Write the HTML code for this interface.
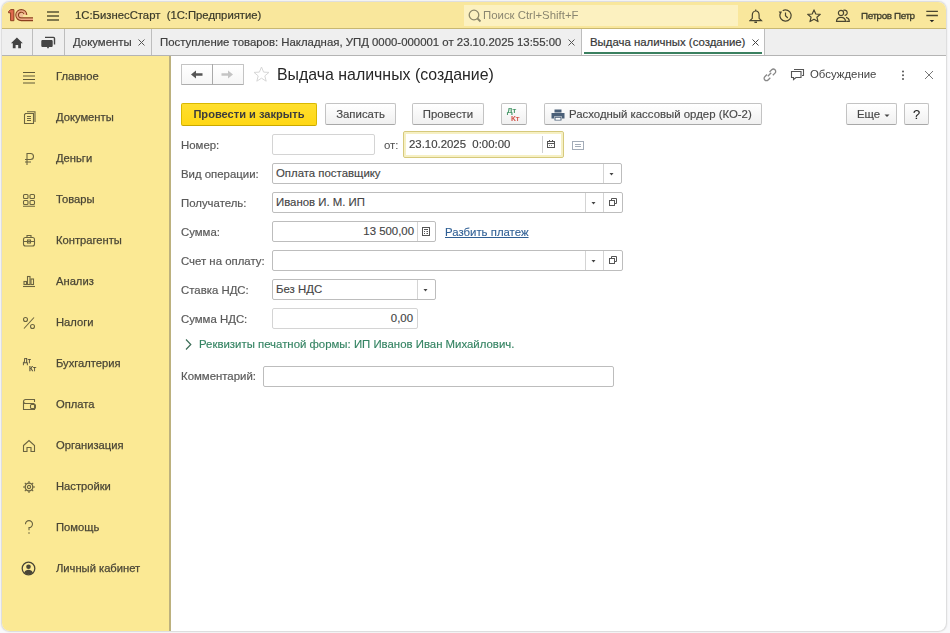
<!DOCTYPE html>
<html><head><meta charset="utf-8">
<style>
*{box-sizing:border-box;margin:0;padding:0}
html,body{width:950px;height:633px;overflow:hidden;background:#f9f9fb;font-family:"Liberation Sans",sans-serif;font-size:11.4px;color:#333}
.a{position:absolute;white-space:nowrap}
#win{position:absolute;left:2px;top:2px;width:944px;height:629px;border-radius:8px;overflow:hidden;background:#fff;box-shadow:0 0 1.5px 0.5px #d8d8d8;filter:blur(0.3px)}
#hdr{position:absolute;left:0;top:0;width:944px;height:27px;background:#f9e79c;border-bottom:1px solid #c8b872}
#tabs{position:absolute;left:0;top:27px;width:944px;height:27px;background:#efefef;border-bottom:1px solid #b4b4b4}
#side{position:absolute;left:0;top:54px;width:169px;height:575px;background:#fbe994;border-right:2px solid #bcb17e}
.sep{position:absolute;top:0;width:1px;height:26px;background:#bdbdbd}
.tab{position:absolute;top:0;height:26px;line-height:26px;color:#404040;-webkit-text-stroke:0.2px #404040}
.x{position:absolute;width:7px;height:7px}
.si{position:absolute;left:54px;color:#4a4636;font-size:11.2px;-webkit-text-stroke:0.25px #4a4636}
.btn{position:absolute;top:101px;height:22px;border:1px solid #c3c3c3;border-bottom-color:#a8a8a8;border-radius:2px;background:linear-gradient(#fff,#f0f0f0);color:#484848;-webkit-text-stroke:0.15px #484848;text-align:center;line-height:20px}
.lbl{position:absolute;left:179px;color:#5a5a5a;-webkit-text-stroke:0.2px #5a5a5a}
.inp{position:absolute;height:21px;border:1px solid #c9c9c9;border-radius:2px;background:#fff;line-height:19px;padding-left:3px;color:#454545;-webkit-text-stroke:0.15px #454545}
.dd{position:absolute;top:0;width:17px;height:19px;border-left:1px solid #d4d4d4}
</style></head><body>
<div id="win">
  <div id="hdr">
    <!-- 1C logo -->
    <svg class="a" style="left:3px;top:3px" width="32" height="20" viewBox="0 0 32 20">
      <path d="M20.4 10.1A4.1 4.1 0 1 0 16.3 14.2H28" fill="none" stroke="#f0a488" stroke-width="1.6"/><circle cx="16.3" cy="10.1" r="2.2" fill="#f3c19a"/>
      <path d="M3.6 6.6L5.6 4.6H8.9V15.7H5.6V7.8H3.6Z" fill="#e06a4e" stroke="#8c3f1f" stroke-width="1"/>
      <path d="M21.8 10.1A5.5 5.5 0 1 0 16.3 15.6H28M18.9 9.1A2.8 2.8 0 1 0 16.3 12.9H28" fill="none" stroke="#8c3f1f" stroke-width="1.1"/>
    </svg>
    <!-- hamburger -->
    <svg class="a" style="left:44px;top:8px" width="14" height="12"><g stroke="#5a5535" stroke-width="1.4"><path d="M1 2H13M1 6H13M1 10H13"/></g></svg>
    <div class="a" style="left:73px;top:7px;font-size:11.3px;color:#3a3a2a;-webkit-text-stroke:0.2px #3a3a2a">1С:БизнесСтарт&nbsp;&nbsp;(1С:Предприятие)</div>
    <div class="a" style="left:462px;top:3px;width:274px;height:21px;background:#fcf1c0"></div>
    <svg class="a" style="left:466px;top:7px" width="14" height="14"><circle cx="6" cy="6" r="4.8" fill="none" stroke="#8c876a" stroke-width="1.3"/><path d="M9.5 9.5L12.5 12.5" stroke="#8c876a" stroke-width="1.8"/></svg>
    <div class="a" style="left:481px;top:7px;color:#8a8670">Поиск Ctrl+Shift+F</div>
    <!-- right icons -->
    <svg class="a" style="left:747px;top:7px" width="14" height="15"><g fill="none" stroke="#4a4630" stroke-width="1.2"><path d="M6.7 0.6V2"/><path d="M6.7 2C4.3 2 3.3 3.9 3.3 6.3V9.3L1 11.6H12.4L10.1 9.3V6.3C10.1 3.9 9.1 2 6.7 2Z"/></g><path d="M5.4 13.2H8" stroke="#4a4630" stroke-width="1.5"/></svg>
    <svg class="a" style="left:776px;top:7px" width="15" height="15"><g fill="none" stroke="#4a4630" stroke-width="1.2"><path d="M4.7 1.65A5.6 5.6 0 1 1 2.24 4.58"/><path d="M7.5 3.6V6.8L9.8 9"/></g><path d="M0.6 2.6L4 2.4L2.6 5.6Z" fill="#4a4630"/></svg>
    <svg class="a" style="left:805px;top:7px" width="15" height="15"><path d="M7 0.9L8.8 5L13.3 5.3L9.9 8.2L11 12.6L7 10.2L3 12.6L4.1 8.2L0.7 5.3L5.2 5Z" fill="none" stroke="#4a4630" stroke-width="1.2" stroke-linejoin="round"/></svg>
    <svg class="a" style="left:833px;top:7px" width="16" height="15"><g fill="none" stroke="#4a4630" stroke-width="1.2"><circle cx="6" cy="3.9" r="2.6"/><path d="M1.5 12.4C1.5 9.6 3.5 8.3 6 8.3S10.5 9.6 10.5 12.4Z"/><path d="M8.4 1.4A2.6 2.6 0 1 1 9.6 6.3"/><path d="M11 8.4C13 8.9 14.3 10.2 14.3 12.4H11.2"/></g></svg>
    <div class="a" style="left:859px;top:8px;font-size:9.9px;letter-spacing:-0.4px;color:#3a3a2a;-webkit-text-stroke:0.3px #3a3a2a">Петров Петр</div>
    <svg class="a" style="left:924px;top:8px" width="14" height="14"><path d="M0.3 1.3H11.9M0.3 5.5H11.9" stroke="#4a4630" stroke-width="1.3"/><path d="M3.6 9.9H8.2L5.9 12.2z" fill="#222"/></svg>
  </div>
  <div id="tabs">
    <svg class="a" style="left:8px;top:8px" width="14" height="12"><path d="M6.9 0.5L12.8 6.2H11V11.2H8.2V8H5.6V11.2H2.8V6.2H1Z" fill="#444"/></svg>
    <div class="sep" style="left:30px"></div>
    <svg class="a" style="left:38px;top:7px" width="17" height="15"><path d="M5 1.4H13.5A1 1 0 0 1 14.5 2.4V8.5" fill="none" stroke="#444" stroke-width="1.4"/><path d="M2.5 4H11.5A1.2 1.2 0 0 1 12.7 5.2V9.8A1.2 1.2 0 0 1 11.5 11H9.2L8 12.8L6.8 11H2.5A1.2 1.2 0 0 1 1.3 9.8V5.2A1.2 1.2 0 0 1 2.5 4Z" fill="#444"/></svg>
    <div class="sep" style="left:62px"></div>
    <div class="tab" style="left:71px">Документы</div>
    <svg class="x" style="left:136px;top:10px"><path d="M0.5 0.5L6.5 6.5M6.5 0.5L0.5 6.5" stroke="#555" stroke-width="1"/></svg>
    <div class="sep" style="left:149px"></div>
    <div class="tab" style="left:158px">Поступление товаров: Накладная, УПД 0000-000001 от 23.10.2025 13:55:00</div>
    <svg class="x" style="left:566px;top:10px"><path d="M0.5 0.5L6.5 6.5M6.5 0.5L0.5 6.5" stroke="#555" stroke-width="1"/></svg>
    <div class="sep" style="left:579px"></div>
    <div class="a" style="left:580px;top:0;width:182px;height:26px;background:#fff"></div>
    <div class="tab" style="left:588px;color:#333">Выдача наличных (создание)</div>
    <svg class="x" style="left:750px;top:10px"><path d="M0.5 0.5L6.5 6.5M6.5 0.5L0.5 6.5" stroke="#444" stroke-width="1"/></svg>
    <div class="a" style="left:582px;top:23px;width:178px;height:2px;background:#3b8060"></div>
    <div class="sep" style="left:762px"></div>
  </div>
  <div id="side">
    <svg class="a" style="left:20px;top:15px" width="14" height="13"><path d="M1 1.5H13M1 5H13M1 8.5H13M1 12H13" stroke="#615b38" stroke-width="1.2"/></svg>
    <div class="si" style="top:14px">Главное</div>
    <svg class="a" style="left:20px;top:55px" width="14" height="14"><g fill="none" stroke="#6b6440" stroke-width="1.1"><path d="M3.5 2.5H11.5V12.5H2.5V3.5Z"/><path d="M5 0.8H13V11"/><path d="M5 5.5H9M5 7.5H9M5 9.5H9"/></g></svg>
    <div class="si" style="top:55px">Документы</div>
    <svg class="a" style="left:21px;top:96px" width="12" height="14"><g fill="none" stroke="#6b6440" stroke-width="1.1"><path d="M4 13V1.5H7.5A3 3 0 0 1 7.5 7.5H2M2 10H8"/></g></svg>
    <div class="si" style="top:96px">Деньги</div>
    <svg class="a" style="left:20px;top:137px" width="14" height="14"><g fill="none" stroke="#6b6440" stroke-width="1.1"><rect x="1.5" y="1.5" width="4.5" height="4" rx="1"/><rect x="8" y="1.5" width="4.5" height="4" rx="1"/><rect x="1.5" y="7.5" width="4.5" height="4" rx="1"/><rect x="8" y="7.5" width="4.5" height="4" rx="1"/><path d="M1 13.2H13"/></g></svg>
    <div class="si" style="top:137px">Товары</div>
    <svg class="a" style="left:20px;top:178px" width="14" height="14"><g fill="none" stroke="#6b6440" stroke-width="1.1"><rect x="1.5" y="3.5" width="11" height="8.5" rx="2"/><path d="M5 3.5V1.5H9V3.5M1.5 7.5H12.5"/><rect x="5.5" y="6" width="3" height="3"/></g></svg>
    <div class="si" style="top:178px">Контрагенты</div>
    <svg class="a" style="left:20px;top:219px" width="14" height="14"><g fill="none" stroke="#6b6440" stroke-width="1.1"><path d="M1 11.5H13"/><rect x="2" y="6.5" width="2.5" height="3"/><rect x="5.5" y="1.5" width="2.5" height="8"/><rect x="9" y="4" width="2.5" height="5.5"/></g></svg>
    <div class="si" style="top:219px">Анализ</div>
    <svg class="a" style="left:20px;top:260px" width="14" height="14"><g fill="none" stroke="#6b6440" stroke-width="1.1"><circle cx="3.5" cy="3.5" r="2"/><circle cx="10.5" cy="10.5" r="2"/><path d="M12 1.5L2 12.5"/></g></svg>
    <div class="si" style="top:260px">Налоги</div>
    <div class="a" style="left:21px;top:301px;font-size:7px;color:#4a4636;line-height:7px;-webkit-text-stroke:0.25px #4a4636">Дт</div><div class="a" style="left:27px;top:309px;font-size:7px;color:#4a4636;line-height:7px;-webkit-text-stroke:0.25px #4a4636">Кт</div>
    <div class="si" style="top:301px">Бухгалтерия</div>
    <svg class="a" style="left:20px;top:341px" width="14" height="14"><g fill="none" stroke="#6b6440" stroke-width="1.1"><path d="M12.5 5V2.5H3.5A2 2 0 0 0 1.5 4.5V12.5H12.5V8"/><rect x="8.5" y="7.5" width="5" height="4" rx="1"/><path d="M1.5 4.5A2 2 0 0 0 3.5 6.5H12.5"/></g></svg>
    <div class="si" style="top:342px">Оплата</div>
    <svg class="a" style="left:20px;top:383px" width="14" height="14"><g fill="none" stroke="#6b6440" stroke-width="1.1"><path d="M1.5 6.5L7 1.5L12.5 6.5V12.5H9V8.5H5V12.5H1.5Z"/></g></svg>
    <div class="si" style="top:383px">Организация</div>
    <svg class="a" style="left:20px;top:424px" width="14" height="14"><g fill="none" stroke="#6b6440" stroke-width="1.1"><circle cx="7" cy="7" r="3.8" stroke-width="1.3"/><circle cx="7" cy="7" r="1.6"/><path d="M7 1V3.2M7 10.8V13M1 7H3.2M10.8 7H13M2.8 2.8L4.3 4.3M9.7 9.7L11.2 11.2M2.8 11.2L4.3 9.7M9.7 4.3L11.2 2.8"/></g></svg>
    <div class="si" style="top:424px">Настройки</div>
    <svg class="a" style="left:22px;top:464px" width="10" height="15"><path d="M1.5 4.2A3.5 3.5 0 1 1 5 7.6V10.2" fill="none" stroke="#6b6440" stroke-width="1.1"/><circle cx="5" cy="13" r="0.8" fill="#6b6440"/></svg>
    <div class="si" style="top:465px">Помощь</div>
    <svg class="a" style="left:19px;top:505px" width="15" height="15"><circle cx="7.5" cy="7.5" r="6.3" fill="none" stroke="#4a4636" stroke-width="1.3"/><circle cx="7.5" cy="5.8" r="2.3" fill="#4a4636"/><path d="M3.2 11.8C4 9.5 5.5 8.8 7.5 8.8S11 9.5 11.8 11.8A6 6 0 0 1 3.2 11.8Z" fill="#4a4636"/></svg>
    <div class="si" style="top:506px">Личный кабинет</div>
  </div>
  <div id="main">
    <!-- nav buttons -->
    <div class="a" style="left:179px;top:62px;width:63px;height:21px;border:1px solid #c4c4c4;border-bottom-color:#adadad;border-radius:1px;background:linear-gradient(#fff,#f6f6f6)"></div>
    <div class="a" style="left:210px;top:62px;width:1px;height:21px;background:#a9a9a9"></div>
    <svg class="a" style="left:189px;top:68px" width="12" height="9"><path d="M4 4.5H11.5" stroke="#555" stroke-width="2.6"/><path d="M0 4.5L5 0.5V8.5Z" fill="#555"/></svg>
    <svg class="a" style="left:219px;top:68px" width="12" height="9"><path d="M0.5 4.5H8" stroke="#c4c4c4" stroke-width="2.6"/><path d="M12 4.5L7 0.5V8.5Z" fill="#c4c4c4"/></svg>
    <svg class="a" style="left:251px;top:64px" width="17" height="17"><path d="M8.5 1L10.6 6.1L16 6.4L11.8 9.9L13.2 15.2L8.5 12.2L3.8 15.2L5.2 9.9L1 6.4L6.4 6.1Z" fill="none" stroke="#d6d6d6" stroke-width="1"/></svg>
    <div class="a" style="left:275px;top:64px;font-size:15.9px;color:#262626">Выдача наличных (создание)</div>
    <!-- right title icons -->
    <svg class="a" style="left:760px;top:65px" width="15" height="15"><g fill="none" stroke="#888" stroke-width="1.3"><path d="M5.8 9.2L9.2 5.8"/><path d="M5 7.5L2.8 9.7A2.3 2.3 0 0 0 6.1 13L8.3 10.8"/><path d="M7.5 5L9.7 2.8A2.3 2.3 0 0 1 13 6.1L10.8 8.3"/></g></svg>
    <svg class="a" style="left:788px;top:65px" width="15" height="14"><g fill="none" stroke="#555" stroke-width="1.1"><path d="M4 2.5H13.5V8.5H12"/><path d="M1.5 4.5H11V10.5H6L3.5 12.5V10.5H1.5Z"/></g></svg>
    <div class="a" style="left:808px;top:66px;color:#444">Обсуждение</div>
    <svg class="a" style="left:899px;top:67px" width="4" height="13"><circle cx="2" cy="2.5" r="1" fill="#555"/><circle cx="2" cy="6.2" r="1" fill="#555"/><circle cx="2" cy="9.9" r="1" fill="#555"/></svg>
    <svg class="a" style="left:922px;top:68px" width="10" height="10"><path d="M1 1L9 9M9 1L1 9" stroke="#777" stroke-width="1"/></svg>
    <!-- command bar -->
    <div class="a" style="left:179px;top:101px;width:136px;height:23px;border:1px solid #d9b800;border-bottom-color:#c9a800;border-radius:2px;background:linear-gradient(#ffdf2e,#ffd715);text-align:center;line-height:21px;font-weight:bold;font-size:11.1px;color:#3c3c3c">Провести и закрыть</div>
    <div class="btn" style="left:323px;width:71px">Записать</div>
    <div class="btn" style="left:410px;width:72px">Провести</div>
    <div class="btn" style="left:499px;width:26px"></div>
    <div class="a" style="left:505px;top:105px;font-size:8px;line-height:8px;color:#2f8a55;-webkit-text-stroke:0.2px #2f8a55">Дт</div>
    <div class="a" style="left:509px;top:113px;font-size:8px;line-height:8px;color:#d0453a;-webkit-text-stroke:0.2px #d0453a">Кт</div>
    <div class="btn" style="left:542px;width:218px;text-align:left;padding-left:24px">Расходный кассовый ордер (КО-2)</div>
    <svg class="a" style="left:549px;top:107px" width="14" height="12"><g fill="#4b6078"><rect x="3.5" y="0.5" width="7" height="3"/><path d="M0.5 4H13.5V9.5H11V7.5H3V9.5H0.5Z"/><rect x="3.5" y="8" width="7" height="3.5"/></g><rect x="4.5" y="8.8" width="5" height="2" fill="#fff"/></svg>
    <div class="btn" style="left:844px;width:51px;text-align:left;padding-left:10px">Еще</div>
    <svg class="a" style="left:882px;top:112px" width="6" height="4"><path d="M0.5 0.5H5.5L3 3Z" fill="#444"/></svg>
    <div class="btn" style="left:902px;width:25px;font-size:13px;line-height:22px;color:#222;-webkit-text-stroke:0.1px #222">?</div>
    <!-- form -->
    <div class="lbl" style="top:137px">Номер:</div>
    <div class="inp" style="left:270px;top:132px;width:103px;border-color:#d4d4d4"></div>
    <div class="a" style="left:382px;top:137px;color:#4d4d4d">от:</div>
    <div class="inp" style="left:401px;top:129px;width:161px;height:27px;border:1px solid #d6c97c;box-shadow:inset 0 0 0 2px #f6f0c4;padding-left:5px;line-height:25px;color:#404040">23.10.2025&nbsp;&nbsp;0:00:00<div class="dd" style="left:138px;top:4px;height:17px;width:20px;border-left-color:#cfcfcf"></div></div>
    <svg class="a" style="left:544px;top:137px" width="10" height="10"><g fill="none" stroke="#555" stroke-width="1"><rect x="1.5" y="2.5" width="7" height="6"/><path d="M1.5 4.5H8.5M3.5 1V3M6.5 1V3"/></g><g fill="#888"><rect x="3" y="6" width="1" height="1"/><rect x="5" y="6" width="1" height="1"/></g></svg>
    <svg class="a" style="left:569px;top:138px" width="14" height="11"><g fill="none" stroke="#a3acb8" stroke-width="1"><rect x="1.5" y="1.5" width="11" height="8"/><path d="M4 4.5H10M4 6.5H10"/></g></svg>

    <div class="lbl" style="top:166px">Вид операции:</div>
    <div class="inp" style="left:270px;top:161px;width:350px;border-color:#bdbdbd">Оплата поставщику<div class="dd" style="left:330px"></div></div>
    <svg class="a" style="left:607px;top:171px" width="5" height="3"><path d="M0.5 0H4.5L2.5 2.5Z" fill="#444"/></svg>

    <div class="lbl" style="top:195px">Получатель:</div>
    <div class="inp" style="left:270px;top:190px;width:351px;border-color:#bdbdbd">Иванов И. М. ИП<div class="dd" style="left:312px"></div><div class="dd" style="left:330px"></div></div>
    <svg class="a" style="left:589px;top:200px" width="5" height="3"><path d="M0.5 0H4.5L2.5 2.5Z" fill="#444"/></svg>
    <svg class="a" style="left:606px;top:195px" width="10" height="10"><g fill="none" stroke="#555" stroke-width="1"><rect x="1.5" y="3.5" width="5" height="5"/><path d="M3.5 3.5V1.5H8.5V6.5H6.5"/></g></svg>

    <div class="lbl" style="top:224px">Сумма:</div>
    <div class="inp" style="left:270px;top:219px;width:164px;border-color:#bdbdbd;text-align:right;padding-right:21px">13 500,00<div class="dd" style="left:144px;text-align:left"></div></div>
    <svg class="a" style="left:419px;top:224px" width="10" height="11"><g fill="none" stroke="#555" stroke-width="1"><rect x="1.5" y="1.5" width="7" height="8"/><path d="M3 3.5H7M3 5.5H4M5.5 5.5H7M3 7.5H4M5.5 7.5H7"/></g></svg>
    <div class="a" style="left:443px;top:224px;color:#2f5f94;text-decoration:underline;-webkit-text-stroke:0.1px #2f5f94">Разбить платеж</div>

    <div class="lbl" style="top:253px">Счет на оплату:</div>
    <div class="inp" style="left:270px;top:248px;width:351px;border-color:#bdbdbd"><div class="dd" style="left:312px"></div><div class="dd" style="left:330px"></div></div>
    <svg class="a" style="left:589px;top:258px" width="5" height="3"><path d="M0.5 0H4.5L2.5 2.5Z" fill="#444"/></svg>
    <svg class="a" style="left:606px;top:253px" width="10" height="10"><g fill="none" stroke="#555" stroke-width="1"><rect x="1.5" y="3.5" width="5" height="5"/><path d="M3.5 3.5V1.5H8.5V6.5H6.5"/></g></svg>

    <div class="lbl" style="top:282px">Ставка НДС:</div>
    <div class="inp" style="left:270px;top:277px;width:164px;border-color:#bdbdbd">Без НДС<div class="dd" style="left:144px"></div></div>
    <svg class="a" style="left:421px;top:287px" width="5" height="3"><path d="M0.5 0H4.5L2.5 2.5Z" fill="#444"/></svg>

    <div class="lbl" style="top:311px">Сумма НДС:</div>
    <div class="inp" style="left:270px;top:306px;width:146px;border-color:#d4d4d4;text-align:right;padding-right:4px">0,00</div>

    <svg class="a" style="left:182px;top:336px" width="9" height="13"><path d="M2 1.5L6.8 6.5L2 11.5" fill="none" stroke="#3d6e58" stroke-width="1.2"/></svg>
    <div class="a" style="left:197px;top:336px;color:#358463;-webkit-text-stroke:0.15px #358463">Реквизиты печатной формы: ИП Иванов Иван Михайлович.</div>

    <div class="lbl" style="top:368px">Комментарий:</div>
    <div class="inp" style="left:261px;top:364px;width:351px;border-color:#bdbdbd"></div>
  </div>
</div>
</body></html>
